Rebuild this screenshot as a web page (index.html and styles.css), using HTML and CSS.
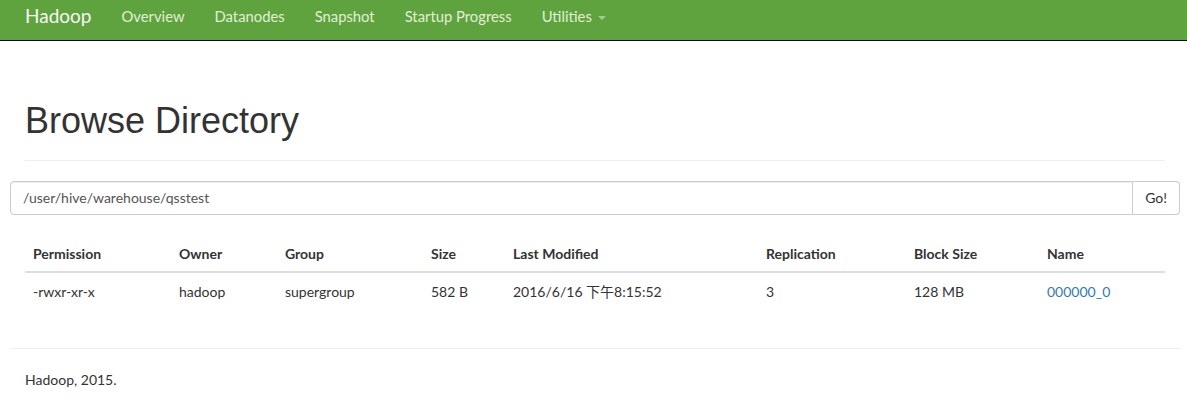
FILE: index.html
```html
<!DOCTYPE html>
<html>
<head>
<meta charset="utf-8">
<title>Browsing HDFS</title>
<link rel="stylesheet" href="styles.css">
</head>
<body>
<header class="navbar">
  <div class="nav-inner">
    <span class="brand">Hadoop</span>
    <ul class="nav">
      <li><a href="#">Overview</a></li>
      <li><a href="#">Datanodes</a></li>
      <li><a href="#">Snapshot</a></li>
      <li><a href="#">Startup Progress</a></li>
      <li><a href="#">Utilities <span class="caret"></span></a></li>
    </ul>
  </div>
</header>
<main class="container">
  <div class="page-header"><h1>Browse Directory</h1></div>
  <form class="input-group">
    <input class="path" type="text" value="/user/hive/warehouse/qsstest">
    <button class="go" type="button">Go!</button>
  </form>
  <table class="listing">
    <thead>
      <tr><th>Permission</th><th>Owner</th><th>Group</th><th>Size</th><th>Last Modified</th><th>Replication</th><th>Block Size</th><th>Name</th></tr>
    </thead>
    <tbody>
      <tr><td>-rwxr-xr-x</td><td>hadoop</td><td>supergroup</td><td>582 B</td><td>2016/6/16 下午8:15:52</td><td>3</td><td>128 MB</td><td><a href="#">000000_0</a></td></tr>
    </tbody>
  </table>
  <hr class="rule">
  <footer class="footer"><p>Hadoop, 2015.</p></footer>
</main>
</body>
</html>
```
FILE: styles.css
```css
* { box-sizing: border-box; }
body {
  margin: 0;
  font-family: Lato, "Noto Sans CJK SC", sans-serif;
  font-size: 14px;
  line-height: 20px;
  color: #333;
  background: #fff;
}
.navbar {
  background: #5fa33e;
  border-bottom: 1px solid #0a0a0a;
  height: 41px;
}
.nav-inner {
  display: flex;
  align-items: center;
  height: 40px;
  padding-left: 25px;
}
.brand {
  font-size: 19px;
  color: #f7f7f7;
  line-height: 20px;
  margin-top: -8px;
  margin-right: 15px;
}
.nav {
  list-style: none;
  margin: 0;
  padding: 0;
  display: flex;
}
.nav li a {
  display: block;
  padding: 0 15px;
  color: #e2efd6;
  text-decoration: none;
  font-size: 14.8px;
  line-height: 20px;
  margin-top: -8px;
}
.caret {
  display: inline-block;
  width: 0;
  height: 0;
  margin-left: 2px;
  vertical-align: middle;
  border-top: 4px solid #a9c795;
  border-left: 4px solid transparent;
  border-right: 4px solid transparent;
}
.container {
  width: 1170px;
  margin-left: 10px;
}
.page-header {
  margin: 60px 15px 20px;
  padding-bottom: 9px;
  border-bottom: 1px solid #eee;
}
.page-header h1 {
  margin: 0 0 10px;
  font-family: "Liberation Sans", Arial, sans-serif;
  font-weight: 400;
  font-size: 36px;
  line-height: 39.6px;
  color: #333;
}
.input-group {
  display: flex;
  height: 34px;
  margin: 0 0 20px;
}
.path {
  flex: 1;
  height: 34px;
  padding: 6px 12px;
  border: 1px solid #ccc;
  border-radius: 4px 0 0 4px;
  font: inherit;
  color: #555;
  box-shadow: inset 0 1px 1px rgba(0,0,0,.075);
}
.go {
  height: 34px;
  padding: 6px 12px;
  border: 1px solid #ccc;
  border-left: 0;
  border-radius: 0 4px 4px 0;
  background: #fff;
  font: inherit;
  color: #333;
}
.listing {
  width: 1140px;
  margin: 0 15px;
  border-collapse: collapse;
}
.listing th, .listing td {
  padding: 8px;
  text-align: left;
  line-height: 20px;
}
.listing th {
  font-weight: 700;
  padding-top: 9px;
  padding-bottom: 7px;
  border-bottom: 2px solid #ddd;
}
.listing th:nth-child(1) { width: 146px; }
.listing th:nth-child(2) { width: 106px; }
.listing th:nth-child(3) { width: 146px; }
.listing th:nth-child(4) { width: 82px; }
.listing th:nth-child(5) { width: 253px; }
.listing th:nth-child(6) { width: 148px; }
.listing th:nth-child(7) { width: 133px; }
.listing td { padding-top: 9px; }
.listing a { color: #337ab7; text-decoration: none; }
.rule {
  margin: 38px 0 21px;
  border: 0;
  border-top: 1px solid #eee;
}
.footer p {
  margin: 0 15px;
}
```
